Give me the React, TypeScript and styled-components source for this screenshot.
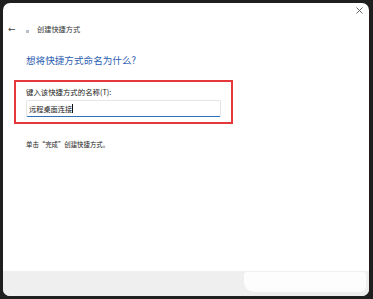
import React from 'react'
import { createGlobalStyle, styled } from 'styled-components'

const GlobalStyle = createGlobalStyle`
  html, body {
    margin: 0;
    padding: 0;
    background: #1f1f1f;
  }
  body {
    width: 373px;
    height: 299px;
    overflow: hidden;
    font-family: "Noto Sans CJK SC", "Noto Sans", sans-serif;
  }
`

const Desk = styled.div`
  width: 373px;
  height: 299px;
  padding: 3px 4px 3px 3px;
  box-sizing: border-box;
  background: #1f1f1f;
`

const Window = styled.div`
  width: 366px;
  height: 293px;
  background: #ffffff;
  border-radius: 7px;
  overflow: hidden;
  display: flex;
  flex-direction: column;
`

const TopBar = styled.div`
  height: 19px;
  display: flex;
  justify-content: flex-end;
  align-items: center;
  padding-right: 4px;
`

const CloseButton = styled.div`
  width: 11px;
  height: 11px;
  display: flex;
  align-items: center;
  justify-content: center;
  margin-top: -4px;
`

const NavRow = styled.div`
  height: 14px;
  display: flex;
  align-items: center;
  padding-left: 5px;
`

const BackArrow = styled.span`
  font-size: 9px;
  line-height: 14px;
  color: #444;
  width: 18px;
  font-family: "DejaVu Sans", sans-serif;
`

const AppIcon = styled.span`
  width: 3px;
  height: 3px;
  background: #b9bfc8;
  margin: 4px 8px 0 0;
`

const Title = styled.span`
  font-size: 7.2px;
  line-height: 14px;
  color: #333;
`

const Body = styled.div`
  flex: 1;
  display: flex;
  flex-direction: column;
  align-items: flex-start;
  padding-left: 23px;
`

const Heading = styled.div`
  margin-top: 18px;
  font-size: 9.6px;
  line-height: 12px;
  color: #2c5cb0;
`

const Highlight = styled.div`
  margin: 14px 0 0 -12px;
  width: 219px;
  height: 44px;
  box-sizing: border-box;
  border: 2px solid #e5383b;
  padding: 4px 0 0 10px;
  display: flex;
  flex-direction: column;
`

const Label = styled.div`
  font-size: 7.4px;
  line-height: 10px;
  color: #222;
  margin-top: 1px;
`

const Input = styled.div`
  margin-top: 3px;
  width: 195px;
  height: 17px;
  box-sizing: border-box;
  border: 1px solid #e6e6e6;
  border-bottom: 1.5px solid #2f6fb6;
  border-radius: 2px;
  display: flex;
  align-items: center;
  padding-left: 2px;
`

const InputText = styled.span`
  font-size: 7.2px;
  color: #222;
  line-height: 10px;
`

const Caret = styled.span`
  width: 1px;
  height: 9px;
  background: #111;
`

const Note = styled.div`
  margin-top: 16px;
  font-size: 6.4px;
  line-height: 10px;
  color: #222;
`

const Footer = styled.div`
  height: 25px;
  background: #efefef;
  display: flex;
  align-items: flex-start;
  justify-content: flex-end;
  padding: 1px 3px 0 0;
  box-sizing: border-box;
`

const Smudge = styled.div`
  width: 122px;
  height: 20px;
  background: #fdfdfd;
  border-radius: 3px 3px 6px 10px;
`

export default function App() {
  return (
    <>
      <GlobalStyle />
      <Desk>
        <Window>
          <TopBar>
            <CloseButton>
              <svg width="7" height="7" viewBox="0 0 7 7">
                <path d="M0.5 0.5 L6.5 6.5 M6.5 0.5 L0.5 6.5" stroke="#555" strokeWidth="0.9" />
              </svg>
            </CloseButton>
          </TopBar>
          <NavRow>
            <BackArrow>←</BackArrow>
            <AppIcon />
            <Title>创建快捷方式</Title>
          </NavRow>
          <Body>
            <Heading>想将快捷方式命名为什么?</Heading>
            <Highlight>
              <Label>键入该快捷方式的名称(T):</Label>
              <Input>
                <InputText>远程桌面连接</InputText>
                <Caret />
              </Input>
            </Highlight>
            <Note>单击“完成”创建快捷方式。</Note>
          </Body>
          <Footer>
            <Smudge />
          </Footer>
        </Window>
      </Desk>
    </>
  )
}
